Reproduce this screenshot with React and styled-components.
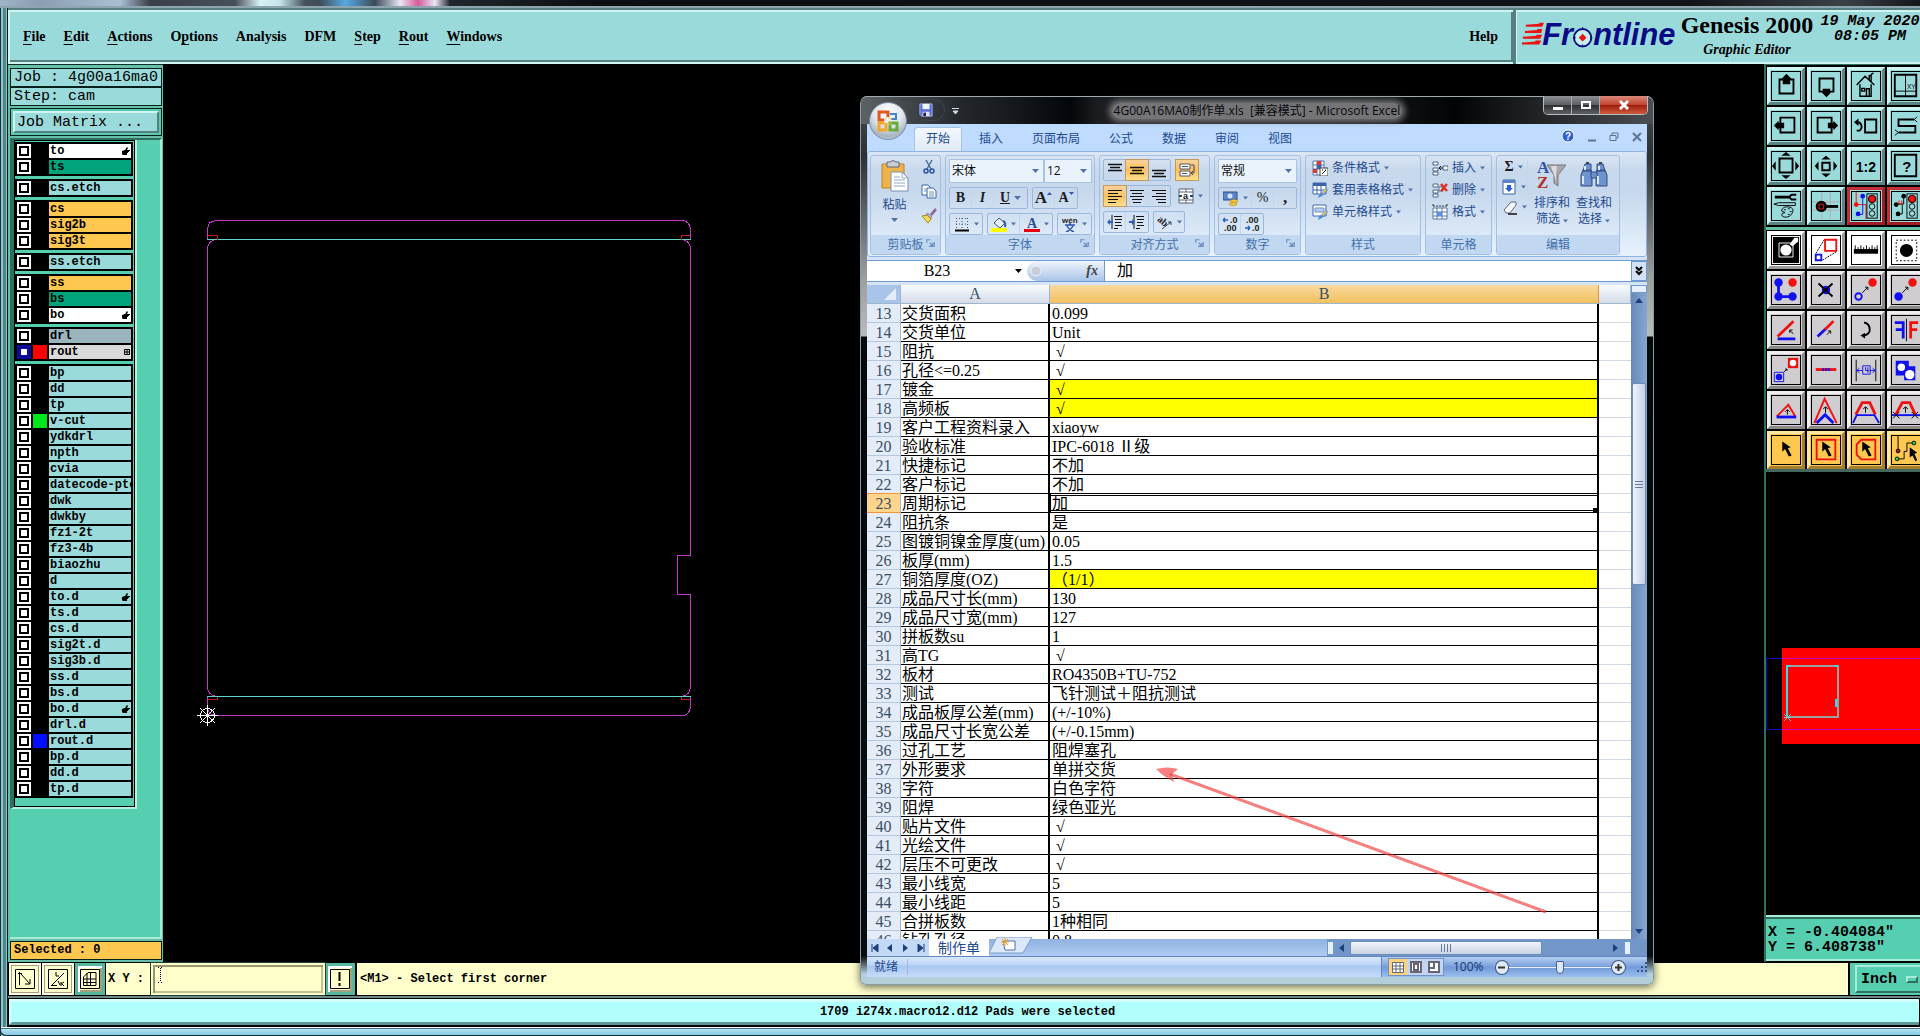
import styled, { createGlobalStyle, css } from 'styled-components';

const GlobalStyle = createGlobalStyle`
  * {
    box-sizing: border-box;
  }

  body {
    margin: 0;
    background: #000;
    overflow: hidden;
  }

  button, select, input {
    font: inherit;
    color: inherit;
    margin: 0;
    padding: 0;
    border: 0;
    background: none;
  }
`;

const mono = '"Liberation Mono", "Courier New", monospace';
const serif = '"Liberation Serif", "Times New Roman", serif';
const office = '"Open Sans", "Noto Sans CJK SC", sans-serif';

/* ---------- application frame ---------- */

const Screen = styled.div`
  position: relative;
  height: 100vh;
  display: flex;
  flex-direction: column;
  overflow: hidden;
  color: #000;
  background: linear-gradient(90deg, #1d3038 0 1px, #8fc4c8 1px 3px, #4d898c 3px 6px, #8ec2c3 6px 7px, #0c1a1a 7px);
`;

const DesktopStrip = styled.div`
  flex: none;
  height: 8px;
  border-bottom: 2px solid #8ea4ae;
  background: linear-gradient(90deg, #9fb4c8 0, #8b9db0 40px, #a9bfd4 120px, #3a3f48 150px, #46505a 235px, #d8f2f4 260px, #c4e4ea 280px, #46505a 305px, #3f4c58 320px, #57a9e4 345px, #3c4a58 375px, #e9e6f4 400px, #d45c9a 418px, #e9e6f4 435px, #20262c 450px, #0b0e12 600px, #101418 88%, #3c4048 96%, #14181c);
`;

const Body = styled.div`
  flex: 1;
  min-height: 0;
  margin-left: 8px;
  display: flex;
  flex-direction: column;
`;

const raised = css`
  border: 2px solid;
  border-color: #d0f4f2 #557f80 #557f80 #d0f4f2;
`;

const MenuRow = styled.header`
  flex: none;
  height: 56px;
  display: flex;
  gap: 3px;
  background: #557f80;
  border-top: 2px solid #557f80;
`;

const MenuBar = styled.nav`
  flex: 1;
  display: flex;
  align-items: center;
  gap: 18px;
  padding: 0 15px 1px 13px;
  background: #9bdadb;
  font: bold 14px ${serif};
  border-bottom: 2px solid #d0f4f2;
  border-left: 2px solid #d0f4f2;
  border-top: 2px solid #d0f4f2;
  box-shadow: inset -2px -2px #557f80;

  u {
    text-underline-offset: 3px;
    text-decoration-thickness: 1px;
  }
`;

const MenuButton = styled.button`
  margin-left: ${(p) => (p.$end ? 'auto' : '0')};
`;

const Banner = styled.div`
  flex: none;
  width: 404px;
  display: flex;
  padding-left: 3px;
  background: #9bdadb;
  border-top: 2px solid #d0f4f2;
  border-left: 1px solid #d0f4f2;
  border-bottom: 2px solid #d0f4f2;
`;

const Product = styled.div`
  flex: none;
  width: 138px;
  text-align: center;
`;

const ProductName = styled.h1`
  margin: 0;
  font: bold 24px/27px ${serif};
  white-space: nowrap;
`;

const ProductPart = styled.div`
  font: italic bold 14px/22px ${serif};
`;

const Clock = styled.time`
  flex: none;
  width: 100px;
  margin-left: 4px;
  padding-top: 2px;
  font: italic bold 15px/15px ${mono};
  text-align: center;
  white-space: nowrap;
`;

const Main = styled.main`
  flex: 1;
  min-height: 0;
  display: flex;
  background: #000;
`;

/* ---------- layers ---------- */

const LayerPanel = styled.aside`
  flex: none;
  width: 155px;
  display: flex;
  flex-direction: column;
  padding: 3px 1px 2px 2px;
  border-top: 1px solid #0a2f28;
  background: #66bfa6;
`;

const InfoLine = styled.div`
  height: 19px;
  padding-left: 3px;
  border: 1px solid #08201c;
  background: #9bdadb;
  font: ${(p) => (p.$small ? 'bold 12px' : '15px')}/17px ${mono};
  white-space: pre;
  overflow: hidden;
  ${(p) => p.$amber && css`background: #fdc750;`}
`;

const MatrixBox = styled.div`
  margin: 2px 0 2px;
  padding: 2px;
  border: 1px solid #08201c;
  background: #58cbae;
`;

const MatrixButton = styled.button`
  ${raised}
  width: 100%;
  height: 22px;
  padding-left: 2px;
  background: #9bdadb;
  font: 15px/17px ${mono};
  text-align: left;
`;

const LayerArea = styled.div`
  flex: 1;
  min-height: 0;
  margin: 0 0 2px;
  border-top: 2px solid #2f6f60;
  border-right: 2px solid #a8ecd8;
  border-bottom: 2px solid #a8ecd8;
  background: #56ceb0;
`;

const LayerList = styled.div`
  width: 127px;
  padding: 2px 2px 9px 1px;
  display: flex;
  flex-direction: column;
  gap: 3px;
  border-left: 4px solid #2f6f60;
  border-right: 2px solid #b4f0de;
  border-bottom: 2px solid #b4f0de;
  box-shadow: inset 1px 1px #000, inset -1px -1px #000;
`;

const LayerGroup = styled.div`
  padding: 2px;
  display: flex;
  flex-direction: column;
  gap: 2px;
  background: #000;
`;

const LayerRow = styled.label`
  height: 14px;
  display: grid;
  grid-template-columns: 14px 14px 1fr;
  column-gap: 2px;
`;

const LayerCheck = styled.input`
  appearance: none;
  width: 14px;
  height: 14px;
  border: 2px solid ${(p) => (p.$active ? '#0c0c9c' : '#fff')};
  background: #fff;
  box-shadow: inset 0 0 0 2px ${(p) => (p.$active ? '#0c0c9c' : '#000')};
`;

const Swatch = styled.span`
  background: ${(p) => p.$color || '#000'};
`;

const LayerName = styled.span`
  min-width: 0;
  display: flex;
  align-items: center;
  justify-content: space-between;
  padding: 0 1px;
  overflow: hidden;
  white-space: nowrap;
  background: ${(p) => p.$color || '#9bdadb'};
  font: bold 12px/14px ${mono};
`;

const Canvas = styled.section`
  flex: 1;
  min-width: 0;
  overflow: hidden;

  svg {
    display: block;
  }
`;

/* ---------- tool palette ---------- */

const ToolPanel = styled.aside`
  flex: none;
  width: 156px;
  display: flex;
  flex-direction: column;
  overflow: hidden;
  border-left: 2px solid #2f6f60;
`;

const ToolGrid = styled.div`
  flex: none;
  width: 162px;
  display: grid;
  grid-template-columns: repeat(4, 38px);
  gap: 2px;
  padding: ${(p) => (p.$second ? '1px 1px 0' : '2px 1px 0')};
  border-top: ${(p) => (p.$second ? '3px solid #66bfa6' : '1px solid #2f6f60')};
  border-bottom: ${(p) => (p.$second ? '3px solid #44675f' : '0')};
  margin-bottom: ${(p) => (p.$second ? '0' : '2px')};
`;

const tones = {
  teal: ['#9bdadb', '#cdf5f4', '#5b8485'],
  alert: ['#9bdadb', '#c03036', '#a01c22'],
  white: ['#ffffff', '#ffffff', '#9a9a9a'],
  grey: ['#cfcdcf', '#f1eef0', '#8b898a'],
  amber: ['#fdc750', '#ffe7a0', '#a57f2e'],
};

const ToolButton = styled.button`
  width: 38px;
  height: 38px;
  padding: 1px;
  border: 3px solid;
  border-color: ${(p) => `${tones[p.$tone][1]} ${tones[p.$tone][2]} ${tones[p.$tone][2]} ${tones[p.$tone][1]}`};
  background: ${(p) => tones[p.$tone][0]};

  svg {
    display: block;
    border: 1px solid #000;
  }
`;

const MiniMap = styled.div`
  flex: 1;
  min-height: 0;
  overflow: hidden;
`;

const Coordinates = styled.div`
  flex: none;
  height: 46px;
  margin-bottom: 1px;
  padding: 8px 2px 0;
  border-top: 2px solid #a8ecd8;
  border-bottom: 2px solid #a8ecd8;
  box-shadow: inset 0 2px #2f6f60;
  background: #56ceb0;
  font: bold 15px/15px ${mono};
  white-space: pre;
`;

/* ---------- bottom bars ---------- */

const PromptBar = styled.footer`
  flex: none;
  height: 34px;
  display: flex;
  padding-left: 1px;
  border: solid #000;
  border-width: 1px 0;
  background: #000;
`;

const PromptButton = styled.button`
  width: ${(p) => (p.$teal ? '30px' : '32px')};
  margin-right: 1px;
  display: grid;
  place-items: center;
  background: #ffffcc;
  ${(p) => p.$teal
    ? css`border: 3px solid #56b79c; box-shadow: inset 2px 2px #fff, inset -2px -2px #a5a080;`
    : css`border: 2px solid #ffffe8; box-shadow: inset 0 0 0 1px #a5a080;`}
`;

const PromptLabel = styled.label`
  position: relative;
  flex: none;
  display: flex;
  align-items: center;
  gap: 7px;
  padding-left: 2px;
  background: #ffffcc;
  font: bold 12px ${mono};
`;

const CoordInput = styled.input`
  width: 174px;
  height: 32px;
  padding: 0 6px;
  border: 2px solid #ffffcc;
  outline: 1px solid #1a4038;
  box-shadow: inset 2px 2px #9a966e, inset -2px -2px #c4c092;
  background: #ffffcc;
`;

const TextCursor = styled.svg`
  position: absolute;
  right: 162px;
  top: 4px;
`;

const Prompt = styled.output`
  flex: 1;
  margin-left: 1px;
  padding-left: 3px;
  background: #ffffcc;
  font: bold 12px/32px ${mono};
`;

const UnitBox = styled.div`
  flex: none;
  width: 70px;
  margin-left: 2px;
  padding: 2px 0 2px 5px;
  overflow: hidden;
  background: #56ceb0;
`;

const UnitButton = styled.button`
  width: 86px;
  height: 28px;
  display: flex;
  align-items: center;
  gap: 9px;
  padding-left: 4px;
  border: 2px solid;
  border-color: #a8ecd8 #2f6f60 #2f6f60 #a8ecd8;
  font: bold 15px ${mono};
`;

const UnitMark = styled.span`
  width: 12px;
  height: 7px;
  border: 2px solid;
  border-color: #a8ecd8 #2f6f60 #2f6f60 #a8ecd8;
`;

const MessageBar = styled.div`
  flex: none;
  height: 31px;
  padding: 1px;
  border-top: 2px solid #6e8a88;
  background: #000;
`;

const Message = styled.div`
  height: 26px;
  padding-left: 4px;
  border: 3px solid #d2fffd;
  border-bottom-color: #5f9896;
  border-right: 0;
  background: #b0fffd;
  font: bold 12px/20px ${mono};
  text-align: center;
`;

const FrameBottom = styled.div`
  flex: none;
  height: 9px;
  margin-left: -8px;
  border-bottom: 1px solid #173038;
  border-left: 1px solid #173038;
  border-radius: 0 0 0 6px;
  background: linear-gradient(#eafcff 0 1px, #4f6f78 1px 2px, #b6e4f4 2px, #82c8e6);
`;

/* ---------- spreadsheet window ---------- */

const BookWindow = styled.section`
  position: absolute;
  left: 860px;
  top: 96px;
  width: 794px;
  height: 889px;
  display: flex;
  flex-direction: column;
  padding: 0 7px 8px;
  border-radius: 7px 7px 6px 6px;
  background:
    linear-gradient(#b4cfda, #b4cfda) 0 100% / 100% 8px no-repeat,
    linear-gradient(#4a4d50, #2c3032 60px, #9a9c9e 180px, #b8babb 240px, #05090a 241px, #070d10 860px, #b4cfda 878px);
  box-shadow: inset 0 0 0 1px #8a9ba4, 0 2px 8px #0009;
  font: 12px/16px ${office};
  color: #1e4a8f;
`;

const TitleBar = styled.div`
  flex: none;
  position: relative;
  height: 28px;
  margin: 0 -6px;
  display: flex;
  align-items: center;
  justify-content: center;
  border-radius: 6px 6px 0 0;
  border-top: 1px solid #9fabb0;
  background: linear-gradient(90deg, #5d6265, #24282c 100px, #04070a 210px, #1c1d20 30%, #1c1d20 60%, #020405 75%, #4c4f52);
`;

const TitleText = styled.span`
  padding: 0 2px;
  border-radius: 8px;
  white-space: pre;
  color: #08080a;
  background: #8c8c8ecc;
  box-shadow: 0 0 6px 3px #8c8c8ecc;
`;

const QuickBar = styled.div`
  position: absolute;
  left: 38px;
  top: 2px;
  width: 46px;
  height: 22px;
  padding: 3px 0 0 20px;
  border: 1px solid #3d4348;
  border-left: 0;
  border-radius: 0 11px 11px 0;
`;

const QuickMore = styled.button`
  position: absolute;
  left: 91px;
  top: 6px;
`;

const WindowButtons = styled.div`
  position: absolute;
  right: 5px;
  top: -1px;
  display: flex;
  border: 1px solid #b5bcc0;
  border-top: 0;
  border-radius: 0 0 5px 5px;
  overflow: hidden;
`;

const WindowButton = styled.button`
  width: ${(p) => (p.$close ? '47px' : '28px')};
  height: 18px;
  display: grid;
  place-items: center;
  border-right: ${(p) => (p.$close ? '0' : '1px solid #a4abb0')};
  background: ${(p) => (p.$close
    ? 'linear-gradient(#d98a7c, #c2432f 48%, #9c1c0c 50%, #d05a3c)'
    : 'linear-gradient(#8c9094, #5d6165 48%, #2c3033 50%, #5c6064)')};
`;

const OfficeButton = styled.button`
  position: absolute;
  left: 9px;
  top: 6px;
  width: 38px;
  height: 38px;
  display: grid;
  place-items: center;
  border: 1px solid #7d8c9c;
  border-radius: 50%;
  background: radial-gradient(circle at 50% 25%, #fff, #dfe6ee 45%, #a7b4c2 75%, #e5eef6);
`;

const Content = styled.div`
  flex: 1;
  min-height: 0;
  display: flex;
  flex-direction: column;
  background: #d6e4f5;
`;

const TabStrip = styled.div`
  flex: none;
  height: 27px;
  display: flex;
  align-items: flex-end;
  gap: 5px;
  padding-left: 47px;
  padding-right: 5px;
  background: #bfdbff;
`;

const Tab = styled.button`
  height: 24px;
  padding: 0 12px;
  border-radius: 3px 3px 0 0;
  ${(p) => p.$active && css`
    background: linear-gradient(#f5f9fe, #dfe9f5);
    box-shadow: inset 1px 1px #a5c3e8, inset -1px 0 #a5c3e8;
  `}
`;

const TabTools = styled.div`
  margin-left: auto;
  height: 27px;
  display: flex;
  align-items: center;
  gap: 13px;
`;

const Ribbon = styled.div`
  flex: none;
  height: 106px;
  display: flex;
  gap: 4px;
  padding: 3px 3px 1px 2px;
  border: 1px solid #8db2e3;
  border-radius: 3px;
  background: linear-gradient(#dbe6f4, #c9d9ed 18px, #c7d8ed 40px, #e6f1fc);
`;

const Group = styled.fieldset`
  flex: none;
  min-width: 0;
  margin: 0;
  padding: 0;
  width: ${(p) => p.$w}px;
  display: flex;
  flex-direction: column;
  border: 1px solid #a3c0e0;
  border-radius: 3px;
  overflow: hidden;
`;

const GroupBody = styled.div`
  flex: 1;
  min-height: 0;
  display: flex;
  flex-direction: ${(p) => (p.$row ? 'row' : 'column')};
  gap: ${(p) => (p.$row ? '6px' : '4px')};
  padding: 3px;
`;

const GroupCaption = styled.div`
  flex: none;
  height: 19px;
  display: grid;
  grid-template-columns: 14px 1fr 14px;
  align-items: center;
  text-align: center;
  background: #c1d8f0;
  color: #4470ad;
`;

const ToolLine = styled.div`
  display: flex;
  gap: 4px;
`;

const Combo = styled.label`
  height: 24px;
  display: flex;
  align-items: center;
  padding: 0 4px 0 2px;
  width: ${(p) => p.$w}px;
  margin-right: -4px;
  border: 1px solid #a9c3e4;
  background: #eaf2fb;
  color: #111;

  select {
    flex: 1;
    min-width: 0;
    appearance: none;
    outline: 0;
  }
`;

const ToolSet = styled.div`
  height: 22px;
  display: flex;
  border: 1px solid ${(p) => (p.$plain ? 'transparent' : '#9ab8dc')};
  border-radius: 2px;
`;

const MiniButton = styled.button`
  width: ${(p) => p.$w || 22}px;
  display: flex;
  align-items: center;
  justify-content: center;
  gap: ${(p) => (p.$tight ? '0' : '4px')};
  border-right: 1px solid #c3d5ea;
  color: #1c1c24;
  font: ${(p) => (p.$big ? 17 : 14)}px ${serif};
  ${(p) => p.$on && css`background: linear-gradient(#fbd29a, #fdc05c 50%, #ffe08c); box-shadow: 0 0 0 1px #c39a5a;`}

  &:last-child {
    border-right: 0;
  }
`;

const SizeMark = styled.svg`
  align-self: flex-start;
  margin-top: 4px;
`;

const RibbonRow = styled.button`
  height: 18px;
  display: flex;
  align-items: center;
  gap: 4px;
  padding-left: 3px;
  white-space: nowrap;
`;

const BigButton = styled.button`
  width: ${(p) => p.$w || 36}px;
  display: flex;
  flex-direction: column;
  align-items: center;
  gap: 5px;
  padding-top: 1px;
  white-space: nowrap;
`;

const IconColumn = styled.div`
  display: flex;
  flex-direction: column;
  gap: 4px;
`;

const FormulaBar = styled.div`
  flex: none;
  height: 20px;
  margin: 4px 0;
  display: flex;
  background: #fff;
  box-shadow: 0 -1px #6f9ad0, 0 1px #6f9ad0;
  color: #000;
  font: 16px/20px "Liberation Serif", "Noto Sans CJK SC", serif;
`;

const NameBox = styled.label`
  width: 160px;
  display: flex;
  align-items: center;
  padding-right: 5px;

  input {
    flex: 1;
    min-width: 0;
    padding-right: 8px;
    text-align: center;
    outline: 0;
  }
`;

const FxButton = styled.button`
  width: 78px;
  display: flex;
  align-items: center;
  justify-content: space-between;
  padding: 0 6px 0 3px;
  border-right: 1px solid #6f9ad0;
  border-radius: 10px 0 0 10px;
  background: linear-gradient(#f0f5fc, #a9c4e8);
  font: italic bold 14px ${serif};
  color: #444;
`;

const FormulaInput = styled.input`
  flex: 1;
  min-width: 0;
  padding-left: 12px;
  outline: 0;
`;

const ExpandButton = styled.button`
  width: 16px;
  display: grid;
  place-items: center;
  border: 1px solid #6f9ad0;
  background: #d3e2f6;
`;

const SheetArea = styled.div`
  flex: 1;
  min-height: 0;
  display: flex;
`;

const SheetClip = styled.div`
  flex: 1;
  min-width: 0;
  overflow: hidden;
  background: #fff;
`;

const Sheet = styled.table`
  width: 100%;
  table-layout: fixed;
  border-spacing: 0;
  color: #000;
  font: 16px/16px "Liberation Serif", "Noto Sans CJK SC", serif;

  th {
    padding: 2px 0 0;
    font-weight: normal;
    color: #3a4f66;
    background: #e4ecf7;
    border-right: 1px solid #9eb6ce;
    border-bottom: 1px solid #b4c8e0;
  }

  thead th {
    height: 19px;
    padding: 0;
    line-height: 18px;
    background: linear-gradient(#f9fcfd, #d3dbe9);
    border-bottom-color: #9eb6ce;
  }

  thead th.corner {
    padding-right: 4px;
    text-align: right;
    background: #a9c4e9;
  }

  thead th.corner svg {
    display: block;
    margin-left: auto;
  }

  thead th.picked {
    background: linear-gradient(#f9d99f, #f1c15f);
    border-right-color: #e8913c;
  }

  tr.current th {
    background: #ffd58d;
    border-bottom-color: #f29536;
    box-shadow: 0 -1px #f29536;
  }
`;

const Cell = styled.td`
  height: 19px;
  padding: 2px 0 0 ${(p) => (p.$tick ? '6px' : p.$value ? '2px' : '1px')};
  overflow: hidden;
  white-space: nowrap;
  border-bottom: 1px solid #000;
  border-right: 2px solid #000;
  background: ${(p) => (p.$fill ? '#ff0' : '#fff')};

  ${(p) => p.$selected && css`
    position: relative;
    box-shadow: inset 1px 0 #000, inset 0 1px #fff, inset 0 -1px #fff, inset 0 2px #000, inset 0 -2px #000;

    &::after {
      content: '';
      position: absolute;
      right: 0;
      bottom: 0;
      width: 4px;
      height: 4px;
      background: #000;
    }
  `}
`;

const BlankCell = styled.td`
  padding: 0;
  border-bottom: 1px solid #d0d7e5;
`;

const VScroll = styled.div`
  flex: none;
  width: 16px;
  display: flex;
  flex-direction: column;
  align-items: center;
  background: linear-gradient(90deg, #6889b8, #86a6d2);
`;

const SplitBox = styled.span`
  width: ${(p) => (p.$upright ? '7px' : '16px')};
  height: ${(p) => (p.$upright ? '14px' : '8px')};
  border: 1px solid #6f9ad0;
  background: #e6f0fc;
`;

const ScrollArrow = styled.button`
  display: grid;
  place-items: center;
  width: 16px;
  height: 15px;
`;

const VThumb = styled.div`
  width: 14px;
  height: 202px;
  margin-top: 75px;
  margin-bottom: auto;
  display: grid;
  place-items: center;
  border: 1px solid #6e8cb8;
  border-radius: 2px;
  background: linear-gradient(90deg, #eef3fa, #c4d2e6);
`;

const SheetTabs = styled.div`
  flex: none;
  height: 17px;
  display: flex;
  align-items: center;
  background: linear-gradient(#8fb2e0, #b0cbf0);
`;

const SheetNav = styled.div`
  width: 62px;
  height: 17px;
  display: flex;
  align-items: center;
  justify-content: space-around;
  background: #c3d9f5;
`;

const SheetTab = styled.button`
  height: 17px;
  padding: 0 9px;
  background: #fff;
  font: 14px/17px "Noto Sans CJK SC", sans-serif;
`;

const HScroll = styled.div`
  margin-left: auto;
  width: 320px;
  height: 17px;
  display: flex;
  align-items: center;
  background: #7396c8;
`;

const HThumb = styled.div`
  width: 192px;
  height: 14px;
  margin-right: auto;
  display: grid;
  place-items: center;
  border: 1px solid #6e8cb8;
  border-radius: 2px;
  background: linear-gradient(#f2f5fa, #c8d3e4);
`;

const StatusBar = styled.div`
  flex: none;
  height: 21px;
  display: flex;
  align-items: center;
  border-top: 1px solid #5f86bd;
  background: linear-gradient(#d8e7fb, #bdd5f7 8px, #a8c6f0 9px, #c6dcfa);
`;

const StatusText = styled.span`
  width: 41px;
  padding-left: 7px;
  border-right: 1px solid #9db9de;
`;

const ZoomTools = styled.div`
  margin-left: auto;
  width: 266px;
  height: 20px;
  display: flex;
  align-items: center;
  gap: 9px;
  padding-left: 6px;
  border-left: 1px solid #5f86bd;
  background: linear-gradient(#b4cdf2, #7ea4dc 9px, #7099d6 10px, #9dbff0);

  input {
    appearance: none;
    flex: none;
    width: 102px;
    height: 14px;
    margin: 0 -9px;
    background: linear-gradient(#e5effc, #e5effc) center / 100% 1px no-repeat;
  }

  input::-webkit-slider-thumb {
    appearance: none;
    width: 8px;
    height: 13px;
    border: 1px solid #45608c;
    border-radius: 1px 1px 4px 4px;
    background: #dce8f8;
  }
`;

const ZoomValue = styled.span`
  width: 33px;
  color: #14366e;
`;

const ViewButtons = styled.div`
  display: flex;
  border: 1px solid #6f93c8;
  background: #c4d6ef;

  button {
    width: 18px;
    height: 16px;
    display: grid;
    place-items: center;
  }

  button:first-child {
    background: #ffd27a;
  }
`;

const RoundButton = styled.button`
  width: 15px;
  height: 15px;
  display: grid;
  place-items: center;
  border: 1px solid #3d567f;
  border-radius: 50%;
  background: #dfe9f7;
`;

const Annotation = styled.svg`
  position: absolute;
  left: 1150px;
  top: 760px;
  pointer-events: none;
`;

/* ---------- drawings ---------- */

function Caret({ color = '#4f74ab', size = 7 }) {
  return (
    <svg width={size} height="4" viewBox="0 0 7 4" aria-hidden="true">
      <path d="M0 0h7L3.500 4z" fill={color} />
    </svg>
  );
}

function Logo() {
  return (
    <svg width="164" height="36" viewBox="0 0 164 36" role="img" aria-label="Frontline">
      <g fill="#e11">
        <path d="M6 12.500l14-1v-1h5l-2 4H6zM5 19l13-1v-1h5l-1 4H5zM3 25l14-1v-1h6l-2 4H3zM2 31l14-1v-1h6l-2 4H2z" />
      </g>
      <g fill="#0a0a84" fontFamily="Liberation Sans, Arial, sans-serif" fontWeight="bold" fontStyle="italic" fontSize="32">
        <text x="23" y="34">Fr</text>
        <text x="76" y="34">ntline</text>
      </g>
      <circle cx="65" cy="26" r="9" fill="#c9eef0" stroke="#0a0a84" strokeWidth="2" />
      <path d="M65 15v21M55 26h20" stroke="#0a0a84" strokeWidth="1" strokeDasharray="3 15" />
      <path d="M65 22l4 4-4 4-4-4z" fill="#e11" />
    </svg>
  );
}

function Hand() {
  return (
    <svg width="8" height="8" viewBox="0 0 8 8" aria-hidden="true">
      <path d="M0 4l3-1 2-3 1 1-1 2h3v1H7v1H6v1H5v2H1L0 7z" />
    </svg>
  );
}

function Board() {
  return (
    <svg width="640" height="700" viewBox="163 64 640 700" fill="none" shapeRendering="crispEdges">
      <g stroke="#c838c8">
        <path d="M207.500 239V230q0-9.500 9.500-9.500h464q9.500 0 9.500 9.500V239" />
        <path d="M216 239.500q-8.500 1-8.500 11V686q0 9 9 10.500M682 239.500q8.500 1 8.500 11V555.500h-13v39h13V686q0 9-9 10.500" />
        <path d="M207.500 696v10q0 9.500 9.500 9.500h464q9.500 0 9.500-9.500v-10" />
      </g>
      <path d="M207 239.500h484M207 696.500h484" stroke="#5fd4c8" />
      <path d="M208 235.500h9v4M690 235.500h-9v4M208 699.500h9v-3M690 699.500h-9v-3" stroke="#c02020" />
      <g stroke="#fff">
        <path d="M197 715.500h21M207.500 705v21M200 708l15 15M215 708l-15 15" />
        <circle cx="207.500" cy="715.500" r="7" />
      </g>
    </svg>
  );
}

const RED = '#f01010';
const BLUE = '#1010f0';
const cursor = <path d="M11 6l9 6-3 1 4 8-3 1-4-8-3 3z" />;
const trafficLight = (
  <>
    <rect x="16" y="2" width="11" height="26" fill="#9bdadb" stroke="#000" />
    <circle cx="21.500" cy="7.500" r="4" fill={RED} stroke="#000" />
    <circle cx="21.500" cy="15.500" r="3" fill="none" stroke="#000" />
    <circle cx="21.500" cy="23" r="3" fill="none" stroke="#000" />
  </>
);

const tools = [
  { name: 'Pan up', tone: 'teal', art: <><path d="M8 8h15v15H8z" fill="none" stroke="#000" strokeWidth="2" /><path d="M15.500 2l6 6h-2v5h-8V8h-2z" /></> },
  { name: 'Pan down', tone: 'teal', art: <><path d="M8 7h15v14H8z" fill="none" stroke="#000" strokeWidth="2" /><path d="M15.500 27l5-5h-1v-4h-8v4h-1z" /></> },
  { name: 'Home', tone: 'teal', art: <path d="M5 14L14 4.500 24 14M8.500 13v13h12V13M18.500 8V4h2v6M20 3l3-2M10.500 17.500h3v3h-3zM15.500 26v-8h3v8" fill="none" stroke="#000" strokeWidth="1.500" /> },
  { name: 'Zoom XY', tone: 'teal', art: <><path d="M3 3h23v23H3z" fill="none" stroke="#000" strokeWidth="2" /><path d="M14.500 3v23M3 20.500h23" stroke="#000" /><text x="16" y="18" fontSize="7" fontFamily="Liberation Sans">XY</text></> },
  { name: 'Pan left', tone: 'teal', art: <><path d="M9 6h15v16H9z" fill="none" stroke="#000" strokeWidth="2" /><path d="M2 14.500l5-5v2h6v6H7v2z" /></> },
  { name: 'Pan right', tone: 'teal', art: <><path d="M6 6h15v16H6z" fill="none" stroke="#000" strokeWidth="2" /><path d="M28 14.500l-5-5v2h-6v6h6v2z" /></> },
  { name: 'Previous view', tone: 'teal', art: <><path d="M14 8h12v14H14z" fill="none" stroke="#000" strokeWidth="2" /><path d="M5 20h3q3-2 2-6-1-3-4-3" fill="none" stroke="#000" strokeWidth="2" /><path d="M2 11l5-4v8z" /></> },
  { name: 'Profile', tone: 'teal', art: <><path d="M24 8H7v7h18v7H7" fill="none" stroke="#000" strokeWidth="2" /><path d="M24 8l3-3M24 8l3 3M7 22l-4-3M7 22l-4 3" stroke="#000" /></> },
  { name: 'Zoom in', tone: 'teal', art: <><path d="M8 7h14v15H8z" fill="none" stroke="#000" strokeWidth="2" /><path d="M10 4h10l-5-4zM10 25h10l-5 4zM4 10v10l-4-5zM25 10v10l4-5z" transform="translate(0 0)" /></> },
  { name: 'Zoom out', tone: 'teal', art: <><path d="M11 11.500h8v8h-8z" fill="none" stroke="#000" strokeWidth="2" /><path d="M10 8h10l-5-4zM10 23h10l-5 4zM7 10v10l-4-5zM23 10v10l4-5z" /></> },
  { name: 'Scale', tone: 'teal', art: <text x="4" y="21" fontSize="15" fontWeight="bold" fontFamily="Liberation Sans">1:2</text> },
  { name: 'Query', tone: 'teal', art: <><path d="M3 3h23v23H3z" fill="none" stroke="#000" strokeWidth="2" /><text x="11" y="21" fontSize="16" fontFamily="Liberation Sans" fontWeight="bold">?</text></> },
  { name: 'Options', tone: 'teal', art: <><path d="M3 4h16v3H3z" /><path d="M26 3h-5q-4 2 0 5h5" fill="none" stroke="#000" strokeWidth="2" /><path d="M2 13l5-1.500h18v3H7z" fill="none" stroke="#000" /><path d="M10 20q2-5 8-4 6 1 4 6-2 5-8 5-5-1-3-4l3-1z" fill="none" stroke="#000" /><path d="M13 19h2M17 18h2M19 21h2M17 24h2" stroke="#000" /></> },
  { name: 'Highlight', tone: 'teal', art: <><path d="M10.500 0v29M19.500 0v29M0 10.500h29M0 19.500h29" stroke="#b9a8b0" /><circle cx="10" cy="15.500" r="6" /><path d="M15 14h13v3H15z" /><path d="M7.500 13h5v5h-5z" fill="none" stroke={RED} /></> },
  { name: 'Net check', tone: 'alert', art: <><path d="M4.500 0v13M4 13.500h11V29" fill="none" stroke={RED} /><path d="M11.500 4v20H6" fill="none" stroke={BLUE} /><circle cx="4.500" cy="13.500" r="2.500" fill={RED} /><circle cx="11.500" cy="4.500" r="2.500" fill={BLUE} /><circle cx="6.500" cy="23.500" r="2.500" fill={BLUE} />{trafficLight}</> },
  { name: 'Net analyze', tone: 'alert', art: <><path d="M12.500 4v9H4M6 23.500h5V14" fill="none" stroke="#000" /><path d="M5 12.500h7M7.500 9v3M10.500 9v3" stroke={RED} /><circle cx="12.500" cy="4.500" r="2.500" /><circle cx="4.500" cy="13.500" r="2.500" /><circle cx="6.500" cy="23.500" r="2.500" />{trafficLight}</> },
];

const editTools = [
  { name: 'Negative', tone: 'white', art: <><path d="M1 1h28v28H1z" /><path d="M7.500 7.500h15v15h-15z" fill="none" stroke="#fff" /><circle cx="15" cy="15" r="6" fill="#fff" /><path d="M19 9l5-7h4v4l-6 5z" fill="#fff" /></> },
  { name: 'Resize', tone: 'white', art: <><path d="M14 4h12v12H14z" fill="none" stroke={RED} strokeWidth="2" /><path d="M4 20h6v6H4z" fill="none" stroke={BLUE} strokeWidth="2" /><path d="M13 4L4 19M26 17l-15 9" stroke="#000" strokeDasharray="2 1" /></> },
  { name: 'Measure', tone: 'white', art: <><path d="M2 14h26v5H2z" /><path d="M3.500 10v5M6.500 12v3M9.500 10v5M12.500 12v3M15.500 10v5M18.500 12v3M21.500 10v5M24.500 12v3M27 10v5" stroke="#000" /></> },
  { name: 'Select area', tone: 'white', art: <><path d="M4.500 4.500h22v22h-22z" fill="none" stroke="#000" strokeDasharray="2 2" /><circle cx="15.500" cy="15.500" r="7" /></> },
  { name: 'Connect', tone: 'grey', art: <><path d="M7 7v15h15" fill="none" stroke={BLUE} strokeWidth="3" /><g fill={BLUE}><circle cx="7" cy="7" r="4.500" /><circle cx="7" cy="22" r="4.500" /><circle cx="22" cy="22" r="4.500" /></g><circle cx="22" cy="7" r="4.500" fill={RED} /></> },
  { name: 'Delete', tone: 'grey', art: <><circle cx="15" cy="15" r="4.500" fill={BLUE} /><path d="M7 8l15 14M22 8L7 22" stroke="#000" strokeWidth="2" /></> },
  { name: 'Move', tone: 'grey', art: <><circle cx="22" cy="7" r="4.500" fill={RED} /><circle cx="7" cy="22" r="3.500" fill="none" stroke={BLUE} strokeWidth="2" /><path d="M11 18l6-6M14 12h3v3" fill="none" stroke="#000" /></> },
  { name: 'Copy', tone: 'grey', art: <><circle cx="22" cy="7" r="4.500" fill={RED} /><circle cx="7" cy="22" r="4.500" fill={BLUE} /><path d="M11 18l6-6M14 12h3v3" fill="none" stroke="#000" /></> },
  { name: 'Rotate', tone: 'grey', art: <><path d="M6 22L23 5.500" stroke={RED} strokeWidth="3" /><path d="M6 24.500h19" stroke={BLUE} strokeWidth="3" /><path d="M23 19l-4-3.500M19 18v-3h3" fill="none" stroke="#000" /></> },
  { name: 'Stretch', tone: 'grey', art: <><path d="M6 22l9-8.500" stroke={BLUE} strokeWidth="3" /><path d="M14 14.500l9-9" stroke={RED} strokeWidth="3" /><path d="M16 20l4-4M17 16h3v3" fill="none" stroke="#000" /></> },
  { name: 'Turn', tone: 'grey', art: <><path d="M13 7q6 1 6 8 0 5-7 6" fill="none" stroke="#000" strokeWidth="2" /><path d="M9 21l5-3v6z" /></> },
  { name: 'Mirror', tone: 'grey', art: <><path d="M3 7h9v17M4 14.500h8" fill="none" stroke={BLUE} strokeWidth="3" /><path d="M28 7h-8v17M27 14.500h-8" fill="none" stroke={RED} strokeWidth="3" /><path d="M15.500 3v24" stroke="#000" /></> },
  { name: 'Replace', tone: 'grey', art: <><path d="M17 2h11v11H17z" fill={RED} /><circle cx="22.500" cy="7.500" r="3.500" fill="#fff" /><path d="M2.500 17.500h10v10h-10z" fill="none" stroke={BLUE} /><circle cx="7.500" cy="22.500" r="3.500" fill={BLUE} /><path d="M13 17l3-3M14 14h2v2" fill="none" stroke="#000" /></> },
  { name: 'Trim', tone: 'grey', art: <><path d="M4 14.500h22" stroke={RED} strokeWidth="3" /><path d="M11 14.500h8" stroke={BLUE} strokeWidth="3" strokeDasharray="2 1" /></> },
  { name: 'Spacing', tone: 'grey', art: <><path d="M4.500 4v23M25.500 4v23" stroke="#000" /><path d="M5 15.500h6M19 15.500h6M8 13l-3 2.500L8 18M22 13l3 2.500L22 18M11.500 10.500h8v9h-8zM14.500 12v3.500h3.500M17 12v6" fill="none" stroke={BLUE} /></> },
  { name: 'Merge', tone: 'grey', art: <><path d="M4 5h14v6h7v15H13v-5H4z" fill={BLUE} /><circle cx="10" cy="12" r="4" fill="#fff" /><circle cx="19" cy="20" r="5" fill="#fff" /></> },
  { name: 'Corner', tone: 'grey', art: <><path d="M5 22L17.500 9.500 25 22" fill="none" stroke={RED} strokeWidth="2" /><path d="M5 22.500h21" stroke={BLUE} strokeWidth="3" /><path d="M16.500 20v-5M14 17l2.500-2.500L19 17" fill="none" stroke="#000" /></> },
  { name: 'Peak', tone: 'grey', art: <><path d="M2.500 29L13.500 3l13 26" fill="none" stroke={RED} strokeWidth="2" /><path d="M5 29l9-9 9 9" fill="none" stroke={BLUE} strokeWidth="3" /><path d="M14.500 18v-6M12 14l2.500-2.500L17 14" fill="none" stroke="#000" /></> },
  { name: 'Bridge', tone: 'grey', art: <><path d="M4 20L11 7h8l6 13" fill="none" stroke={RED} strokeWidth="3" /><path d="M1 29l4-8.500h19L29 29" fill="none" stroke={BLUE} strokeWidth="2" /><path d="M14.500 18v-6M12 14l2.500-2.500L17 14" fill="none" stroke="#000" /></> },
  { name: 'Cut bridge', tone: 'grey', art: <><path d="M4 20L11 7h8l6 13" fill="none" stroke={RED} strokeWidth="3" /><path d="M0 20.500h30" stroke={BLUE} strokeWidth="2" /><path d="M14.500 18v-6M12 14l2.500-2.500L17 14M1 17l7 7M8 17l-7 7M21 17l7 7M28 17l-7 7" fill="none" stroke="#000" /></> },
  { name: 'Pick', tone: 'amber', art: cursor },
  { name: 'Pick in frame', tone: 'amber', art: <><path d="M5 4h20v21H5z" fill="none" stroke={RED} strokeWidth="2" />{cursor}</> },
  { name: 'Pick in polygon', tone: 'amber', art: <><path d="M10 4h15v21H10l-5-5V9z" fill="none" stroke={RED} strokeWidth="2" />{cursor}</> },
  { name: 'Pick net', tone: 'amber', art: <><path d="M6.500 0v15M6 24.500h7v-8h3V7.500h6" fill="none" stroke="#000" /><circle cx="6.500" cy="16" r="2" fill="#b02010" stroke="#000" /><circle cx="5.500" cy="24.500" r="2" fill="#3d3" stroke="#000" /><circle cx="23.500" cy="7.500" r="2" fill="#3d3" stroke="#000" /><path d="M19 12l8 6-3 1 3 7-2 1-3-6-3 2z" /></> },
];

function Overview() {
  return (
    <svg width="160" height="442" viewBox="1766 473 160 442" fill="none" shapeRendering="crispEdges">
      <path d="M1782 649h150v96h-150z" fill="#f00" />
      <path d="M1940 659.500h-173.500v71H1940" stroke="#1010b0" />
      <path d="M1782 659.500h150M1782 730.500h150" stroke="#d000c0" />
      <path d="M1787 667h51v51h-51z" stroke="#9aa0a0" strokeWidth="2" />
      <path d="M1787 717v-50h3M1835 667h3M1838 701h-2v6h2" stroke="#2de0e8" strokeWidth="2" />
      <path d="M1784 715l7 7M1791 715l-7 7M1784 718.500h7" stroke="#6cc" />
    </svg>
  );
}

const promptArt = {
  line: <path d="M4.500 16V3M3 4.500h4M6 5l9 10M15 10v5h-5" fill="none" stroke="#000" />,
  angle: <path d="M3 17L16 4M3 16.500h6M8 3v4h3M10 12l2 4M13 13v4M13 15l3-2M14 15l2 2" fill="none" stroke="#000" />,
  grid: <path d="M3.500 8L8 3.500h8v13H3.500zM10.500 3v14M3 10h13M3 13.500h13M7 4v12" fill="none" stroke="#000" />,
  alert: <path d="M9.500 3v9M9.500 14v3" stroke="#000" strokeWidth="2" />,
};

function PromptIcon({ kind }) {
  return (
    <svg width="20" height="20" viewBox="0 0 20 20" aria-hidden="true">
      <path d="M.5.5h19v19H.5z" fill="none" stroke="#000" />
      {promptArt[kind]}
    </svg>
  );
}

const smallArt = {
  save: <><path d="M1 1h14v14H3l-2-2z" fill="#5b6fd6" stroke="#a9b6f0" /><path d="M4 1h8v6H4z" fill="#f2f6fb" /><path d="M4 10h8v5H4z" fill="#dfe3ee" /><path d="M5 11h3v4H5z" fill="#223" /></>,
  cut: <><path d="M5 1l5 9M11 1L6 10" stroke="#4a6f9c" strokeWidth="1.500" /><circle cx="5" cy="12" r="2" fill="none" stroke="#2850a0" strokeWidth="1.500" /><circle cx="11" cy="12" r="2" fill="none" stroke="#2850a0" strokeWidth="1.500" /></>,
  copy: <><path d="M1 2h6l2 2v8H1z" fill="#fff" stroke="#3c64a0" /><path d="M6 5h6l3 3v7H6z" fill="#fff" stroke="#3c64a0" /><path d="M3 6h3M3 8h3M8 9h5M8 11h5M8 13h5" stroke="#6b8fc8" /></>,
  brush: <><path d="M9 7l5-6 2 2-5 6z" fill="#8a6a9c" /><path d="M7 6l4 4-1 2-5-5z" fill="#aab" stroke="#667" strokeWidth=".5" /><path d="M1 9l5-1 4 4-3 4z" fill="#f5d860" stroke="#a88a20" /></>,
  border: <><path d="M2 2.500h12M2 8h12M2.500 2v12M8 2v12M13.500 2v12" stroke="#456" strokeDasharray="1 2" /><path d="M1 14.500h14" stroke="#000" strokeWidth="2" /></>,
  fill: <><path d="M3 7l5-5 6 5-5 5z" fill="#e8eef6" stroke="#456" /><path d="M12 5q3 1 2 6" stroke="#2b5fb0" strokeWidth="2" fill="none" /><path d="M0 12h16v4H0z" fill="#ff0" /></>,
  phonetic: <><text x="0" y="7" fontSize="8" fontWeight="bold" fill="#222" fontFamily="Liberation Sans">wén</text><path d="M3 9h10M8 7v2M5 10q2 4 7 6M11 10q-2 4-7 6" stroke="#2850b0" fill="none" strokeWidth="1.500" /></>,
  top: <path d="M1 2.500h14M3 5.500h10M1 8.500h14" stroke="#111" strokeWidth="1.500" />,
  middle: <path d="M1 5.500h14M3 8.500h10M1 11.500h14" stroke="#111" strokeWidth="1.500" />,
  bottom: <path d="M1 8.500h14M3 11.500h10M1 14.500h14" stroke="#111" strokeWidth="1.500" />,
  left: <path d="M1 2.500h14M1 5.500h10M1 8.500h14M1 11.500h10M1 14.500h8" stroke="#111" />,
  center: <path d="M1 2.500h14M3 5.500h10M1 8.500h14M3 11.500h10M4 14.500h8" stroke="#111" />,
  right: <path d="M1 2.500h14M5 5.500h10M1 8.500h14M5 11.500h10M7 14.500h8" stroke="#111" />,
  wrap: <><path d="M1 2h10v5H1zM1 9h10v5H1z" fill="#fff" stroke="#556" /><path d="M3 4.500h6M3 11.500h5" stroke="#456" /><path d="M12 3h3v8h-3M14 9l-2 2 2 2" fill="none" stroke="#446" /></>,
  merge: <><path d="M1 1h14v14H1zM8 1v3M8 12v3M1 4h14M1 12h14" fill="#fff" stroke="#567" /><path d="M1 8h3M15 8h-3" stroke="#246" strokeWidth="2" /><text x="5" y="11" fontSize="9" fontWeight="bold" fill="#111" fontFamily="Liberation Sans">a</text></>,
  outdent: <><path d="M7 2.500h8M8 5.500h7M8 8.500h6M8 11.500h7M7 14.500h4M5 1v14" stroke="#111" /><path d="M0 8l3-3v2h3v2H3v2z" fill="#2b5fc0" /></>,
  indent: <><path d="M7 2.500h8M8 5.500h7M8 8.500h6M8 11.500h7M7 14.500h4M5 1v14" stroke="#111" /><path d="M6 8L3 5v2H0v2h3v2z" fill="#2b5fc0" /></>,
  rotate: <><text x="1" y="9" fontSize="10" fontWeight="bold" fill="#222" fontFamily="Liberation Serif" transform="rotate(40 4 6)">ab</text><path d="M5 15l9-7M11 8h3v3" stroke="#345" fill="none" /></>,
  money: <><path d="M0 2h14v8H0z" fill="#5a86c8" stroke="#2c4c88" /><circle cx="7" cy="6" r="2.500" fill="#d6e4f8" /><ellipse cx="11" cy="11" rx="4" ry="1.500" fill="#f5c840" stroke="#a67c10" strokeWidth=".5" /><ellipse cx="10" cy="14" rx="4" ry="1.500" fill="#f5c840" stroke="#a67c10" strokeWidth=".5" /></>,
  moreDigits: <><path d="M1 4h5M1 4l2-2M1 4l2 2" stroke="#2b5fc0" fill="none" strokeWidth="1.500" /><text x="8" y="7" fontSize="9" fontWeight="bold" fill="#222" fontFamily="Liberation Sans">.0</text><text x="2" y="15" fontSize="9" fontWeight="bold" fill="#222" fontFamily="Liberation Sans">.00</text></>,
  lessDigits: <><text x="2" y="7" fontSize="9" fontWeight="bold" fill="#222" fontFamily="Liberation Sans">.00</text><path d="M1 12h5M6 12l-2-2M6 12l-2 2" stroke="#2b5fc0" fill="none" strokeWidth="1.500" /><text x="8" y="15" fontSize="9" fontWeight="bold" fill="#222" fontFamily="Liberation Sans">.0</text></>,
  conditional: <><path d="M1 1h11v14H1zM1 5h11M1 9h11M5 1v14M9 1v14" fill="#fff" stroke="#5577a8" /><path d="M5 1h4v4H5zM1 9h4v4H1z" fill="#d83a30" /><path d="M5 5h4v4H5z" fill="#3a62c0" /><path d="M8 8h8v8H8z" fill="#fff" stroke="#444" /><path d="M10 10h1M13 10h1M10 14l4-4" stroke="#222" /></>,
  tableStyle: <><path d="M1 1h13v11H1z" fill="#fff" stroke="#3c64a8" /><path d="M1 1h13v3H1z" fill="#3c64a8" /><path d="M1 8h13M5 2v10M9 2v10" stroke="#3c64a8" /><path d="M14 6l2 2-6 6-4 2 1-3z" fill="#4a8ae0" /><path d="M13 7l2 1-4 4-1-1z" fill="#f0c050" /></>,
  cellStyle: <><path d="M1 1h13v11H1z" fill="#fff" stroke="#3c64a8" /><path d="M3 4h9v4H3z" fill="#b8cff0" stroke="#6a8fc8" /><path d="M14 6l2 2-6 6-4 2 1-3z" fill="#4a8ae0" /><path d="M13 7l2 1-4 4-1-1z" fill="#f0c050" /></>,
  insert: <><path d="M1 2h5v3H1zM1 8h5v3H1zM1 12h5v3H1zM11 6h5v4h-5z" fill="#fff" stroke="#4a6488" /><path d="M7 8h4M7 8l2-2M7 8l2 2" stroke="#111" fill="none" /></>,
  remove: <><path d="M1 2h5v3H1zM1 8h5v3H1zM1 12h5v3H1zM7 5h4v4H7z" fill="#fff" stroke="#4a6488" /><path d="M9 2l6 7M15 2L9 9" stroke="#e03020" strokeWidth="2.500" /></>,
  format: <><path d="M1 4h14v11H1zM1 8h14M1 12h14M5 4v11M10 4v11" fill="#fff" stroke="#5577a8" /><path d="M5 8h5v4H5z" fill="#5b8fe0" /><path d="M1 2h14M1 0v3M15 0v3" stroke="#333" strokeDasharray="2 1" /></>,
  fillDown: <><path d="M2 1h12v14H2z" fill="#fff" stroke="#3c64a8" /><path d="M2 1h12v3H2z" fill="#5a86c8" /><path d="M8 13l-4-4h2V6h4v3h2z" fill="#2b62d0" /></>,
  eraser: <><path d="M2 11l7-8h5v3l-6 8H4z" fill="#f4f7fb" stroke="#667" /><path d="M6 15h9" stroke="#111" strokeWidth="1.500" /></>,
  dialog: <path d="M1 5V1h5M4 10h7V4M5 5l4 4M9 5v4H5" fill="none" stroke="#6d8fc0" strokeWidth="1.500" />,
};

function Small({ kind, size = 16 }) {
  return <svg width={size} height={size} viewBox="0 0 16 16" fill="none" aria-hidden="true">{smallArt[kind]}</svg>;
}

function PasteIcon() {
  return (
    <svg width="28" height="32" viewBox="0 0 28 32" aria-hidden="true">
      <path d="M1 4h22v24H1z" fill="#eeb44c" stroke="#b98328" />
      <path d="M6 2h3q3-3 6 0h3v5H6z" fill="#c7ced6" stroke="#667" />
      <path d="M10 12h11l6 6v13H10z" fill="#fff" stroke="#7a8fb0" />
      <path d="M21 12v6h6M13 17h6M13 20h11M13 23h11M13 26h11" fill="none" stroke="#92a8c8" />
    </svg>
  );
}

function SortIcon() {
  return (
    <svg width="30" height="30" viewBox="0 0 30 30" aria-hidden="true">
      <g fontFamily="Liberation Serif" fontWeight="bold" fontSize="17">
        <text x="0" y="13" fill="#2d54a8">A</text>
        <text x="0" y="28" fill="#b03428">Z</text>
      </g>
      <path d="M10 5h19l-8 10v11l-4-3v-8z" fill="#a9a9ab" stroke="#77777c" />
      <path d="M14 6h6l-1 9v6z" fill="#dcdcde" />
    </svg>
  );
}

function FindIcon() {
  return (
    <svg width="30" height="30" viewBox="0 0 30 30" aria-hidden="true">
      <g fill="#6f93cc" stroke="#2d4a80">
        <path d="M6 4h6v7H4zM18 4h6l2 7h-8zM2 15l2-5h8l1 5v11H2zM17 15l1-5h8l2 5v11H17z" />
        <path d="M12 12h6v6h-6z" />
      </g>
      <path d="M4 16v8M19 16v8M6 6v4M20 6v4" stroke="#dce8fa" strokeWidth="2" />
      <path d="M7 3h3M20 3h3" stroke="#445" strokeWidth="2" />
    </svg>
  );
}

function OfficeLogo() {
  return (
    <svg width="24" height="24" viewBox="0 0 24 24" fill="none" strokeWidth="3" aria-hidden="true">
      <path d="M8 11H3V3h9v5" stroke="#e2571c" />
      <path d="M14 5h6v5h-5" stroke="#3f86d0" strokeWidth="2" />
      <path d="M10 14v7H3v-7h5" stroke="#f4a62a" />
      <path d="M14 21h7v-7h-7z" stroke="#6aab3c" />
      <path d="M9 9h6v6H9z" stroke="#f3c14a" strokeWidth="1" strokeDasharray="2 1" />
    </svg>
  );
}

function Grip() {
  return (
    <svg width="10" height="8" viewBox="0 0 10 8" aria-hidden="true">
      <path d="M.5 0v8M3.500 0v8M6.500 0v8M9.500 0v8" stroke="#6a7c98" />
    </svg>
  );
}

function LevelGrip() {
  return (
    <svg width="8" height="8" viewBox="0 0 8 8" aria-hidden="true">
      <path d="M0 1.500h8M0 4.500h8M0 7.500h8" stroke="#6a7c98" />
    </svg>
  );
}

function Arrow({ dir, color = '#1c3f80' }) {
  const shapes = { left: 'M6 0v8L1 4z', right: 'M1 0v8l5-4z', up: 'M0 6h8L4 1z', down: 'M0 1h8L4 6z', first: 'M1 0v8M7 0v8L2 4z', last: 'M7 0v8M1 0v8l5-4z' };
  return (
    <svg width="8" height="8" viewBox="0 0 8 8" aria-hidden="true">
      <path d={shapes[dir]} fill={color} stroke={dir === 'first' || dir === 'last' ? color : 'none'} />
    </svg>
  );
}

/* ---------- data ---------- */

const menus = [['', 'F', 'ile'], ['', 'E', 'dit'], ['', 'A', 'ctions'], ['O', 'p', 'tions'], ['Analysis', '', ''], ['DFM', '', ''], ['', 'S', 'tep'], ['', 'R', 'out'], ['', 'W', 'indows']];

const white = '#fff';
const green = '#00a47c';
const amber = '#fdc750';

const layerGroups = [
  [{ name: 'to', color: white, hand: true }, { name: 'ts', color: green }],
  [{ name: 'cs.etch' }],
  [{ name: 'cs', color: amber }, { name: 'sig2b', color: amber }, { name: 'sig3t', color: amber }],
  [{ name: 'ss.etch' }],
  [{ name: 'ss', color: amber }, { name: 'bs', color: green }, { name: 'bo', color: white, hand: true }],
  [{ name: 'drl', color: '#9bb4be' }, { name: 'rout', color: '#dadada', swatch: '#f00', active: true }],
  [
    { name: 'bp' }, { name: 'dd' }, { name: 'tp' }, { name: 'v-cut', swatch: '#00e81c' }, { name: 'ydkdrl' }, { name: 'npth' },
    { name: 'cvia' }, { name: 'datecode-pte' }, { name: 'dwk' }, { name: 'dwkby' }, { name: 'fz1-2t' }, { name: 'fz3-4b' },
    { name: 'biaozhu' }, { name: 'd' }, { name: 'to.d', hand: true }, { name: 'ts.d' }, { name: 'cs.d' }, { name: 'sig2t.d' },
    { name: 'sig3b.d' }, { name: 'ss.d' }, { name: 'bs.d' }, { name: 'bo.d', hand: true }, { name: 'drl.d' },
    { name: 'rout.d', swatch: '#0010ff' }, { name: 'bp.d' }, { name: 'dd.d' }, { name: 'tp.d' },
  ],
];

const firstRow = 13;
const rows = [
  ['交货面积', '0.099'], ['交货单位', 'Unit'], ['阻抗', '√'], ['孔径<=0.25', '√'], ['镀金', '√', true], ['高频板', '√', true],
  ['客户工程资料录入', 'xiaoyw'], ['验收标准', 'IPC-6018 Ⅱ级'], ['快捷标记', '不加'], ['客户标记', '不加'], ['周期标记', '加'],
  ['阻抗条', '是'], ['图镀铜镍金厚度(um)', '0.05'], ['板厚(mm)', '1.5'], ['铜箔厚度(OZ)', '（1/1）', true], ['成品尺寸长(mm)', '130'],
  ['成品尺寸宽(mm)', '127'], ['拼板数su', '1'], ['高TG', '√'], ['板材', 'RO4350B+TU-752'], ['测试', '飞针测试＋阻抗测试'],
  ['成品板厚公差(mm)', '(+/-10%)'], ['成品尺寸长宽公差', '(+/-0.15mm)'], ['过孔工艺', '阻焊塞孔'], ['外形要求', '单拼交货'],
  ['字符', '白色字符'], ['阻焊', '绿色亚光'], ['贴片文件', '√'], ['光绘文件', '√'], ['层压不可更改', '√'], ['最小线宽', '5'],
  ['最小线距', '5'], ['合拼板数', '1种相同'], ['钻孔孔径', '0.8'],
];

/* ---------- parts ---------- */

function Layers() {
  return (
    <LayerPanel>
      <InfoLine>Job : 4g00a16ma0</InfoLine>
      <InfoLine>Step: cam</InfoLine>
      <MatrixBox>
        <MatrixButton>Job Matrix ...</MatrixButton>
      </MatrixBox>
      <LayerArea>
        <LayerList>
          {layerGroups.map((group) => (
            <LayerGroup key={group[0].name}>
              {group.map((layer) => (
                <LayerRow key={layer.name}>
                  <LayerCheck type="checkbox" $active={layer.active} />
                  <Swatch $color={layer.swatch} />
                  <LayerName $color={layer.color}>
                    {layer.name}
                    {layer.hand && <Hand />}
                    {layer.active && (
                      <svg width="6" height="6" viewBox="0 0 6 6">
                        <path d="M.5.5h5v5h-5zM3 0v6M0 3h6" fill="none" stroke="#000" />
                      </svg>
                    )}
                  </LayerName>
                </LayerRow>
              ))}
            </LayerGroup>
          ))}
        </LayerList>
      </LayerArea>
      <InfoLine $small $amber>Selected : 0</InfoLine>
    </LayerPanel>
  );
}

function Palette({ items, second }) {
  return (
    <ToolGrid $second={second}>
      {items.map((tool) => (
        <ToolButton key={tool.name} $tone={tool.tone} aria-label={tool.name}>
          <svg width="30" height="30" viewBox="0 0 30 30">{tool.art}</svg>
        </ToolButton>
      ))}
    </ToolGrid>
  );
}

function RibbonGroup({ title, width, row, dialog, children }) {
  return (
    <Group $w={width} aria-label={title}>
      <GroupBody $row={row}>{children}</GroupBody>
      <GroupCaption>
        <span />
        {title}
        {dialog && <Small kind="dialog" size={12} />}
      </GroupCaption>
    </Group>
  );
}

function RibbonBar() {
  return (
    <Ribbon>
      <RibbonGroup title="剪贴板" width={71} row dialog>
        <BigButton $w={46}><PasteIcon />粘贴<Caret /></BigButton>
        <IconColumn>
          <button aria-label="剪切"><Small kind="cut" /></button>
          <button aria-label="复制"><Small kind="copy" /></button>
          <button aria-label="格式刷"><Small kind="brush" /></button>
        </IconColumn>
      </RibbonGroup>
      <RibbonGroup title="字体" width={150} dialog>
        <ToolLine>
          <Combo $w={95}><select aria-label="字体"><option>宋体</option></select><Caret /></Combo>
          <Combo $w={48}><select aria-label="字号"><option>12</option></select><Caret /></Combo>
        </ToolLine>
        <ToolLine>
          <ToolSet>
            <MiniButton><b>B</b></MiniButton>
            <MiniButton><b><i>I</i></b></MiniButton>
            <MiniButton $w={33}><b><u>U</u></b><Caret /></MiniButton>
          </ToolSet>
          <ToolSet>
            <MiniButton $big $tight aria-label="增大字号">
              <b>A</b>
              <SizeMark width="5" height="3"><path d="M0 3h5L2.500 0z" fill="#2d5aa8" /></SizeMark>
            </MiniButton>
            <MiniButton $tight aria-label="减小字号">
              <b>A</b>
              <SizeMark width="5" height="3"><path d="M0 0h5L2.500 3z" fill="#2d5aa8" /></SizeMark>
            </MiniButton>
          </ToolSet>
        </ToolLine>
        <ToolLine>
          <ToolSet><MiniButton $w={32} aria-label="边框"><Small kind="border" /><Caret size={5} /></MiniButton></ToolSet>
          <ToolSet>
            <MiniButton $w={32} aria-label="填充颜色"><Small kind="fill" /><Caret size={5} /></MiniButton>
            <MiniButton $w={32}>
              <svg width="16" height="16" viewBox="0 0 16 16">
                <text x="3" y="12" fontSize="14" fontWeight="bold" fill="#2b4f98" fontFamily="Liberation Serif">A</text>
                <path d="M0 13h16v3H0z" fill="#e60012" />
              </svg>
              <Caret size={5} />
            </MiniButton>
          </ToolSet>
          <ToolSet><MiniButton $w={33} aria-label="拼音"><Small kind="phonetic" /><Caret size={5} /></MiniButton></ToolSet>
        </ToolLine>
      </RibbonGroup>
      <RibbonGroup title="对齐方式" width={111} dialog>
        <ToolLine>
          <ToolSet>
            <MiniButton aria-label="顶端对齐"><Small kind="top" /></MiniButton>
            <MiniButton $on aria-label="垂直居中"><Small kind="middle" /></MiniButton>
            <MiniButton aria-label="底端对齐"><Small kind="bottom" /></MiniButton>
          </ToolSet>
          <ToolSet><MiniButton $on aria-label="自动换行"><Small kind="wrap" /></MiniButton></ToolSet>
        </ToolLine>
        <ToolLine>
          <ToolSet>
            <MiniButton $on aria-label="左对齐"><Small kind="left" /></MiniButton>
            <MiniButton aria-label="居中"><Small kind="center" /></MiniButton>
            <MiniButton aria-label="右对齐"><Small kind="right" /></MiniButton>
          </ToolSet>
          <ToolSet $plain><MiniButton $w={28} aria-label="合并"><Small kind="merge" /><Caret size={5} /></MiniButton></ToolSet>
        </ToolLine>
        <ToolLine>
          <ToolSet>
            <MiniButton aria-label="减少缩进"><Small kind="outdent" /></MiniButton>
            <MiniButton aria-label="增加缩进"><Small kind="indent" /></MiniButton>
          </ToolSet>
          <ToolSet><MiniButton $w={30} aria-label="方向"><Small kind="rotate" /><Caret size={5} /></MiniButton></ToolSet>
        </ToolLine>
      </RibbonGroup>
      <RibbonGroup title="数字" width={87} dialog>
        <ToolLine>
          <Combo $w={79}><select aria-label="数字格式"><option>常规</option></select><Caret /></Combo>
        </ToolLine>
        <ToolLine>
          <ToolSet>
            <MiniButton $w={33} aria-label="会计格式"><Small kind="money" /><Caret size={5} /></MiniButton>
            <MiniButton>%</MiniButton>
            <MiniButton $big><b>,</b></MiniButton>
          </ToolSet>
        </ToolLine>
        <ToolLine>
          <ToolSet>
            <MiniButton aria-label="增加小数位"><Small kind="moreDigits" /></MiniButton>
            <MiniButton aria-label="减少小数位"><Small kind="lessDigits" /></MiniButton>
          </ToolSet>
        </ToolLine>
      </RibbonGroup>
      <RibbonGroup title="样式" width={116}>
        <RibbonRow><Small kind="conditional" />条件格式<Caret size={5} /></RibbonRow>
        <RibbonRow><Small kind="tableStyle" />套用表格格式<Caret size={5} /></RibbonRow>
        <RibbonRow><Small kind="cellStyle" />单元格样式<Caret size={5} /></RibbonRow>
      </RibbonGroup>
      <RibbonGroup title="单元格" width={67}>
        <RibbonRow><Small kind="insert" />插入<Caret size={5} /></RibbonRow>
        <RibbonRow><Small kind="remove" />删除<Caret size={5} /></RibbonRow>
        <RibbonRow><Small kind="format" />格式<Caret size={5} /></RibbonRow>
      </RibbonGroup>
      <RibbonGroup title="编辑" width={124} row>
        <IconColumn>
          <MiniButton $w={28}><b>Σ</b><Caret size={5} /></MiniButton>
          <MiniButton $w={28} aria-label="填充"><Small kind="fillDown" /><Caret size={5} /></MiniButton>
          <MiniButton $w={28} aria-label="清除"><Small kind="eraser" /><Caret size={5} /></MiniButton>
        </IconColumn>
        <BigButton><SortIcon /><span>排序和<br />筛选 <Caret size={5} /></span></BigButton>
        <BigButton><FindIcon /><span>查找和<br />选择 <Caret size={5} /></span></BigButton>
      </RibbonGroup>
    </Ribbon>
  );
}

function SheetTable() {
  return (
    <Sheet>
      <colgroup>
        <col width="34" />
        <col width="149" />
        <col width="549" />
        <col />
      </colgroup>
      <thead>
        <tr>
          <th className="corner" aria-label="全选">
            <svg width="12" height="12" viewBox="0 0 12 12"><path d="M12 0v12H0z" fill="#e4edf9" /></svg>
          </th>
          <th>A</th>
          <th className="picked">B</th>
          <th />
        </tr>
      </thead>
      <tbody>
        {rows.map(([label, value, fill], i) => (
          <tr key={label} className={firstRow + i === 23 ? 'current' : undefined}>
            <th scope="row">{firstRow + i}</th>
            <Cell>{label}</Cell>
            <Cell $value $tick={value === '√'} $fill={fill} $selected={firstRow + i === 23}>{value}</Cell>
            <BlankCell />
          </tr>
        ))}
      </tbody>
    </Sheet>
  );
}

function Workbook() {
  return (
    <BookWindow>
      <TitleBar>
        <QuickBar><button aria-label="保存"><Small kind="save" size={14} /></button></QuickBar>
        <QuickMore aria-label="自定义"><svg width="7" height="7" viewBox="0 0 7 7"><path d="M0 .5h7M1 3h5L3.500 6z" fill="#cdd9ea" stroke="#cdd9ea" /></svg></QuickMore>
        <TitleText>{'4G00A16MA0制作单.xls  [兼容模式] - Microsoft Excel'}</TitleText>
        <WindowButtons>
          <WindowButton aria-label="最小化"><svg width="12" height="12"><path d="M1 8h10v3H1z" fill="#fff" /></svg></WindowButton>
          <WindowButton aria-label="最大化"><svg width="12" height="12"><path d="M2 3h8v6H2z" fill="none" stroke="#fff" strokeWidth="2" /></svg></WindowButton>
          <WindowButton $close aria-label="关闭"><svg width="12" height="12"><path d="M2 2l8 8M10 2l-8 8" stroke="#fff" strokeWidth="3" /></svg></WindowButton>
        </WindowButtons>
      </TitleBar>
      <Content>
        <TabStrip>
          <Tab $active>开始</Tab>
          <Tab>插入</Tab>
          <Tab>页面布局</Tab>
          <Tab>公式</Tab>
          <Tab>数据</Tab>
          <Tab>审阅</Tab>
          <Tab>视图</Tab>
          <TabTools>
            <button aria-label="帮助">
              <svg width="14" height="14" viewBox="0 0 14 14">
                <circle cx="7" cy="7" r="6" fill="#2b62d4" stroke="#fff" />
                <text x="4" y="11" fontSize="10" fontWeight="bold" fill="#fff" fontFamily="Liberation Sans">?</text>
              </svg>
            </button>
            <button aria-label="最小化工作簿"><svg width="8" height="10"><path d="M0 8.500h8" stroke="#5f7490" strokeWidth="2" /></svg></button>
            <button aria-label="还原工作簿"><svg width="10" height="10"><path d="M3 3V1h6v5H7M1 3.500h6v5H1z" fill="none" stroke="#5f7490" /></svg></button>
            <button aria-label="关闭工作簿"><svg width="10" height="10"><path d="M1 1l8 8M9 1L1 9" stroke="#5f7490" strokeWidth="2" /></svg></button>
          </TabTools>
        </TabStrip>
        <RibbonBar />
        <FormulaBar>
          <NameBox><input aria-label="名称框" defaultValue="B23" /><Caret color="#000" /></NameBox>
          <FxButton aria-label="插入函数">
            <svg width="12" height="12"><circle cx="6" cy="6" r="5" fill="#c9ced6" stroke="#eef2f8" /></svg>
            fx
          </FxButton>
          <FormulaInput aria-label="编辑栏" defaultValue="加" />
          <ExpandButton aria-label="展开编辑栏">
            <svg width="8" height="10"><path d="M1 1l3 3 3-3M1 5l3 3 3-3" fill="none" stroke="#000" strokeWidth="2" /></svg>
          </ExpandButton>
        </FormulaBar>
        <SheetArea>
          <SheetClip><SheetTable /></SheetClip>
          <VScroll>
            <SplitBox />
            <ScrollArrow aria-label="向上"><Arrow dir="up" /></ScrollArrow>
            <VThumb><LevelGrip /></VThumb>
            <ScrollArrow aria-label="向下"><Arrow dir="down" /></ScrollArrow>
          </VScroll>
        </SheetArea>
        <SheetTabs>
          <SheetNav>
            <button aria-label="第一张"><Arrow dir="first" /></button>
            <button aria-label="上一张"><Arrow dir="left" /></button>
            <button aria-label="下一张"><Arrow dir="right" /></button>
            <button aria-label="最后一张"><Arrow dir="last" /></button>
          </SheetNav>
          <SheetTab>制作单</SheetTab>
          <button aria-label="插入工作表">
            <svg width="44" height="17" viewBox="0 0 44 17">
              <path d="M8 0h35l-9 16H0z" fill="#dbe8f9" stroke="#7b9ccc" />
              <path d="M14 4h12v9H16z" fill="#fff" stroke="#4f6fa8" />
              <path d="M16 1v8M12 5h8M13 2l6 6M19 2l-6 6" stroke="#f0a030" />
            </svg>
          </button>
          <HScroll>
            <SplitBox $upright />
            <ScrollArrow aria-label="向左"><Arrow dir="left" /></ScrollArrow>
            <HThumb><Grip /></HThumb>
            <ScrollArrow aria-label="向右"><Arrow dir="right" /></ScrollArrow>
            <SplitBox $upright />
            <ScrollArrow as="span" />
          </HScroll>
        </SheetTabs>
        <StatusBar>
          <StatusText>就绪</StatusText>
          <ZoomTools>
            <ViewButtons>
              <button aria-label="普通"><svg width="12" height="11"><path d="M.5.5h11v10H.5zM4 0v11M8 0v11M0 4h12M0 7h12" fill="#fff" stroke="#667" /></svg></button>
              <button aria-label="页面布局"><svg width="12" height="12"><path d="M1 1h10v10H1zM4 3h4v6H4z" fill="#fff" stroke="#667" strokeWidth="2" /></svg></button>
              <button aria-label="分页预览"><svg width="12" height="12"><path d="M1 1h10v10H1zM6 1v6M1 7h6" fill="#fff" stroke="#667" strokeWidth="2" /></svg></button>
            </ViewButtons>
            <ZoomValue>100%</ZoomValue>
            <RoundButton aria-label="缩小"><svg width="9" height="9"><path d="M1 4.500h7" stroke="#333" strokeWidth="2" /></svg></RoundButton>
            <input type="range" aria-label="显示比例" defaultValue="50" />
            <RoundButton aria-label="放大"><svg width="9" height="9"><path d="M1 4.500h7M4.500 1v7" stroke="#333" strokeWidth="2" /></svg></RoundButton>
            <svg width="12" height="12"><path d="M10 2h2M6 6h6M2 10h10" stroke="#39557f" strokeWidth="2" strokeDasharray="2 2" /></svg>
          </ZoomTools>
        </StatusBar>
      </Content>
      <OfficeButton aria-label="Office"><OfficeLogo /></OfficeButton>
    </BookWindow>
  );
}

export default function App() {
  return (
    <>
      <GlobalStyle />
      <Screen>
        <DesktopStrip />
        <Body>
          <MenuRow>
            <MenuBar>
              {menus.map(([before, key, after]) => (
                <MenuButton key={before + key + after}>{before}{key && <u>{key}</u>}{after}</MenuButton>
              ))}
              <MenuButton $end>Help</MenuButton>
            </MenuBar>
            <Banner>
              <Logo />
              <Product>
                <ProductName>Genesis 2000</ProductName>
                <ProductPart>Graphic Editor</ProductPart>
              </Product>
              <Clock>19 May 2020<br />08:05 PM</Clock>
            </Banner>
          </MenuRow>
          <Main>
            <Layers />
            <Canvas><Board /></Canvas>
            <ToolPanel>
              <Palette items={tools} />
              <Palette items={editTools} second />
              <MiniMap><Overview /></MiniMap>
              <Coordinates>{'X = -0.404084"\nY = 6.408738"'}</Coordinates>
            </ToolPanel>
          </Main>
          <PromptBar>
            <PromptButton aria-label="Line"><PromptIcon kind="line" /></PromptButton>
            <PromptButton aria-label="Angle"><PromptIcon kind="angle" /></PromptButton>
            <PromptButton $teal aria-label="Grid"><PromptIcon kind="grid" /></PromptButton>
            <PromptLabel>
              X Y :
              <CoordInput type="text" />
              <TextCursor width="5" height="16" viewBox="0 0 5 16">
                <path d="M0 .5h2M3 .5h2M2.500 1v14M0 15.500h2M3 15.500h2" stroke="#000" strokeDasharray="1 1" />
              </TextCursor>
            </PromptLabel>
            <PromptButton $teal aria-label="Alert"><PromptIcon kind="alert" /></PromptButton>
            <Prompt>&lt;M1&gt; - Select first corner</Prompt>
            <UnitBox><UnitButton>Inch<UnitMark /></UnitButton></UnitBox>
          </PromptBar>
          <MessageBar>
            <Message>1709 i274x.macro12.d12 Pads were selected</Message>
          </MessageBar>
          <FrameBottom />
        </Body>
        <Workbook />
        <Annotation width="400" height="160" viewBox="0 0 400 160">
          <path d="M20 14L396 152" stroke="#f03c3c" strokeOpacity=".65" strokeWidth="3" />
          <path d="M6 9q12-3 22 0l-6 5 2 8Q14 17 6 9z" fill="#f03c3c" fillOpacity=".65" />
        </Annotation>
      </Screen>
    </>
  );
}
